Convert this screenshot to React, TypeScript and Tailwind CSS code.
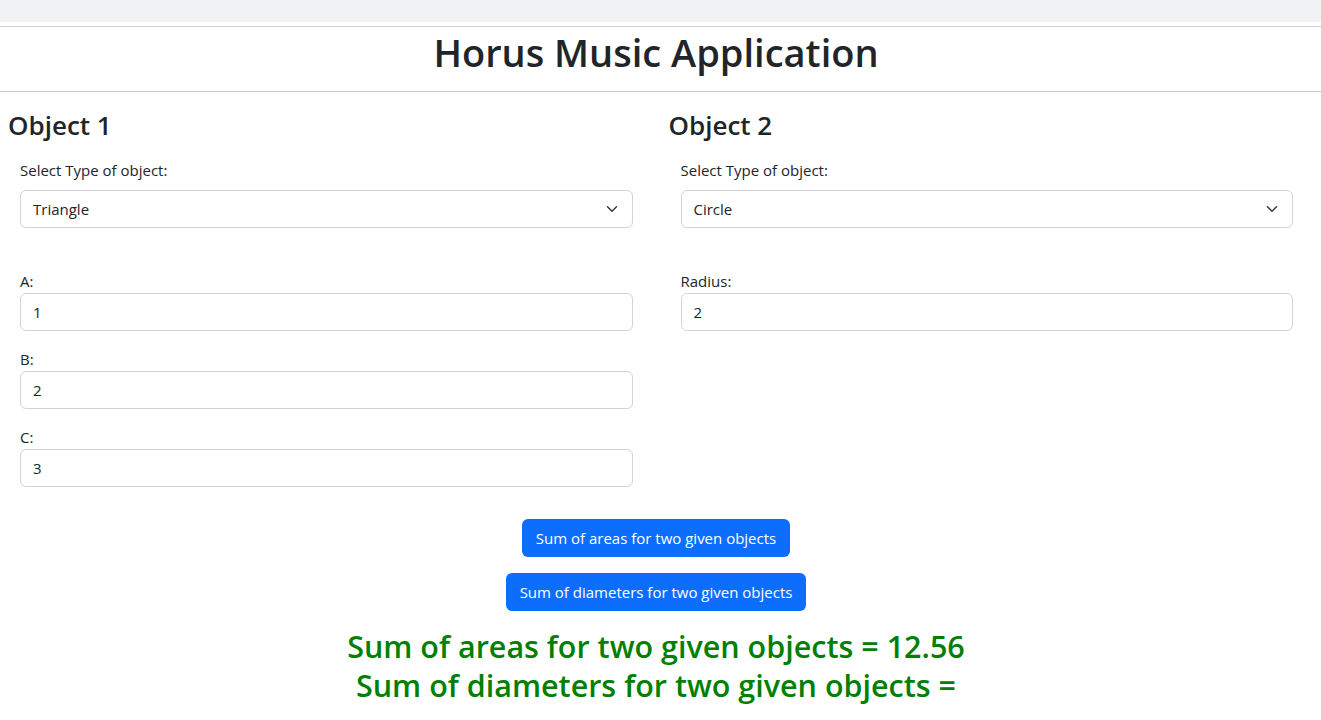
import React, { useState } from "react";

const font = { fontFamily: '"Open Sans", "Liberation Sans", sans-serif' };

const ChevronDown = () => (
  <svg width="16" height="12" viewBox="0 0 16 16" fill="none" className="text-[#343a40]">
    <path d="M2 5l6 6 6-6" stroke="currentColor" strokeWidth="2" strokeLinecap="round" strokeLinejoin="round" />
  </svg>
);

interface FieldProps {
  label: string;
  value: string;
}

const Field: React.FC<FieldProps> = ({ label, value }) => (
  <div className="flex flex-col">
    <label className="h-[24px] text-[15px] leading-6 text-[#212529]">{label}</label>
    <input
      readOnly
      value={value}
      className="h-[38px] w-full rounded-[6px] border border-[#ced4da] bg-white px-3 text-[15px] text-[#212529] outline-none"
    />
  </div>
);

const SelectBox: React.FC<{ value: string }> = ({ value }) => (
  <div className="flex flex-col">
    <label className="text-[15px] leading-6 text-[#212529]">Select Type of object:</label>
    <div className="mt-[8px] flex h-[38px] items-center justify-between rounded-[6px] border border-[#ced4da] bg-white pl-3 pr-[12px] text-[15px] text-[#212529]">
      <span>{value}</span>
      <ChevronDown />
    </div>
  </div>
);

export default function App() {
  const [areas] = useState("12.56");

  return (
    <div className="min-h-screen bg-white text-[#212529]" style={font}>
      <div className="h-[22px] bg-[#f1f2f4]" />
      <div className="mt-[4px] border-t border-[#d4d5d6]" />
      <h1 className="mr-[9px] pb-[14px] pt-0 text-center text-[38px] font-semibold leading-[50px]">Horus Music Application</h1>
      <div className="border-t border-[#c8c9ca]" />

      <div className="grid grid-cols-2">
        <div className="pt-[16px]">
          <h3 className="pl-2 text-[26px] font-semibold leading-[34px]">Object 1</h3>
          <div className="pl-5 pr-7 pt-[16px]">
            <SelectBox value="Triangle" />
            <div className="mt-[41px] flex flex-col gap-[16px]">
              <Field label="A:" value="1" />
              <Field label="B:" value="2" />
              <Field label="C:" value="3" />
            </div>
          </div>
        </div>
        <div className="pt-[16px]">
          <h3 className="pl-2 text-[26px] font-semibold leading-[34px]">Object 2</h3>
          <div className="pl-5 pr-7 pt-[16px]">
            <SelectBox value="Circle" />
            <div className="mt-[41px] flex flex-col gap-[16px]">
              <Field label="Radius:" value="2" />
            </div>
          </div>
        </div>
      </div>

      <div className="mr-[9px] mt-[32px] flex flex-col items-center gap-[16px]">
        <button className="h-[38px] rounded-[6px] bg-[#0d6efd] px-[14px] text-[15px] text-white">
          Sum of areas for two given objects
        </button>
        <button className="h-[38px] rounded-[6px] bg-[#0d6efd] px-[14px] text-[15px] text-white">
          Sum of diameters for two given objects
        </button>
      </div>

      <div className="mr-[9px] mt-[16px] text-center text-[30.5px] font-semibold leading-[39px] text-[#008000]">
        <div>Sum of areas for two given objects = {areas}</div>
        <div>Sum of diameters for two given objects =</div>
      </div>
    </div>
  );
}
